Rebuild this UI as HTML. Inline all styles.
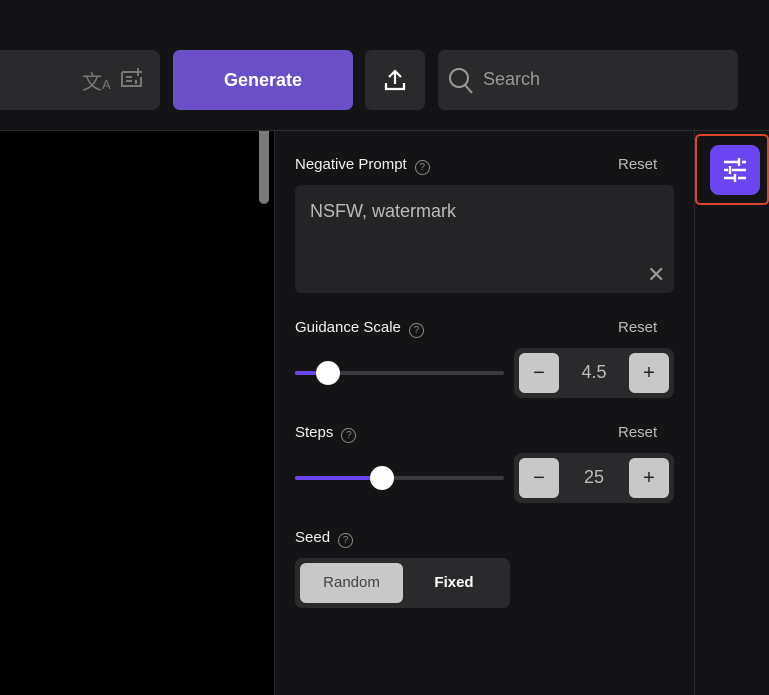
<!DOCTYPE html>
<html><head><style>
*{box-sizing:border-box;margin:0;padding:0}
body{width:769px;height:695px;background:#141416;font-family:"Liberation Sans",sans-serif;position:relative;overflow:hidden;color:#eee}
.abs{position:absolute}
.lbl{font-size:15px;color:#f0f0f0;font-weight:500}
.q{display:inline-block;width:15px;height:15px;border:1.3px solid #888;border-radius:50%;font-size:10px;color:#888;text-align:center;line-height:13px;margin-left:8px;vertical-align:-1px}
.reset{font-size:15px;color:#bbb}
.track{height:4px;background:#3a3a3e;border-radius:2px}
.knob{width:24px;height:24px;border-radius:50%;background:#fff}
.stepper{background:#2a2a2d;border-radius:8px;width:160px;height:50px}
.sb{position:absolute;top:5px;width:40px;height:40px;background:#c8c8c8;border-radius:6px;color:#222;font-size:20px;text-align:center;line-height:40px}
.val{position:absolute;left:0;right:0;top:14px;text-align:center;font-size:18px;color:#bbb}
</style></head><body>
<div class="abs" style="left:0;top:50px;width:160px;height:60px;background:#2a2a2d;border-radius:0 8px 8px 0"></div>
<div class="abs" style="left:82px;top:66px;font-size:20px;color:#777">文<span style="font-size:13px">A</span></div>
<svg class="abs" style="left:120px;top:67px" width="24" height="22" viewBox="0 0 24 22" fill="none" stroke="#777" stroke-width="2"><path d="M2 5h12M2 5v14h19v-9M6 10h6M6 14h6M16 13v4M18 1v8M14 5h8"/></svg>
<div class="abs" style="left:173px;top:50px;width:180px;height:60px;background:#6b4fc8;border-radius:7px;color:#fff;font-size:18px;font-weight:bold;text-align:center;line-height:60px">Generate</div>
<div class="abs" style="left:365px;top:50px;width:60px;height:60px;background:#2a2a2d;border-radius:7px"></div>
<svg class="abs" style="left:383px;top:68px" width="24" height="24" viewBox="0 0 24 24" fill="none" stroke="#fff" stroke-width="2.2"><path d="M12 16V3M6 9l6-6 6 6M3 15v6h18v-6"/></svg>
<div class="abs" style="left:438px;top:50px;width:300px;height:60px;background:#2a2a2d;border-radius:7px"></div>
<svg class="abs" style="left:447px;top:66px" width="28" height="30" viewBox="0 0 28 30" fill="none" stroke="#999" stroke-width="2"><circle cx="12" cy="12" r="9"/><path d="M18 19l7 8"/></svg>
<div class="abs" style="left:483px;top:69px;font-size:18px;color:#999">Search</div>
<div class="abs" style="left:0;top:130px;width:769px;height:1px;background:#2c2c30"></div>
<div class="abs" style="left:0;top:131px;width:274px;height:564px;background:#000"></div>
<div class="abs" style="left:259px;top:131px;width:10px;height:73px;background:#7a7a7a;border-radius:0 0 5px 5px"></div>
<div class="abs" style="left:274px;top:131px;width:1px;height:564px;background:#2c2c30"></div>
<div class="abs" style="left:694px;top:131px;width:1px;height:564px;background:#2c2c30"></div>
<div class="abs lbl" style="left:295px;top:156px">Negative Prompt<span class="q">?</span></div>
<div class="abs reset" style="left:618px;top:156px">Reset</div>
<div class="abs" style="left:295px;top:185px;width:379px;height:108px;background:#242427;border-radius:6px"></div>
<div class="abs" style="left:310px;top:201px;font-size:18px;color:#bbb">NSFW, watermark</div>
<div class="abs" style="left:647px;top:264px;font-size:22px;color:#999;line-height:22px">✕</div>
<div class="abs lbl" style="left:295px;top:319px">Guidance Scale<span class="q">?</span></div>
<div class="abs reset" style="left:618px;top:319px">Reset</div>
<div class="abs track" style="left:295px;top:371px;width:209px"></div>
<div class="abs" style="left:295px;top:371px;width:34px;height:4px;background:#6a45f0;border-radius:2px"></div>
<div class="abs knob" style="left:316px;top:361px"></div>
<div class="abs stepper" style="left:514px;top:348px"><div class="sb" style="left:5px">−</div><div class="val">4.5</div><div class="sb" style="left:115px">+</div></div>
<div class="abs lbl" style="left:295px;top:424px">Steps<span class="q">?</span></div>
<div class="abs reset" style="left:618px;top:424px">Reset</div>
<div class="abs track" style="left:295px;top:476px;width:209px"></div>
<div class="abs" style="left:295px;top:476px;width:88px;height:4px;background:#6a45f0;border-radius:2px"></div>
<div class="abs knob" style="left:370px;top:466px"></div>
<div class="abs stepper" style="left:514px;top:453px"><div class="sb" style="left:5px">−</div><div class="val">25</div><div class="sb" style="left:115px">+</div></div>
<div class="abs lbl" style="left:295px;top:529px">Seed<span class="q">?</span></div>
<div class="abs" style="left:295px;top:558px;width:215px;height:50px;background:#2a2a2d;border-radius:7px"></div>
<div class="abs" style="left:300px;top:563px;width:103px;height:40px;background:#c8c8c8;border-radius:6px;color:#444;font-size:15px;text-align:center;line-height:40px">Random</div>
<div class="abs" style="left:403px;top:563px;width:102px;height:40px;color:#fff;font-size:15px;font-weight:bold;text-align:center;line-height:40px">Fixed</div>
<div class="abs" style="left:695px;top:134px;width:74px;height:71px;border:2px solid #e0442f;border-radius:5px"></div>
<div class="abs" style="left:710px;top:145px;width:50px;height:50px;background:#6a45f0;border-radius:9px"></div>
<svg class="abs" style="left:722px;top:157px" width="26" height="26" viewBox="0 0 26 26" stroke="#fff" stroke-width="2.4" fill="none"><path d="M2 5h14M20 5h4M17 1v8M2 13h4M10 13h14M8 9v8M2 21h10M16 21h8M13 17v8"/></svg>
</body></html>
